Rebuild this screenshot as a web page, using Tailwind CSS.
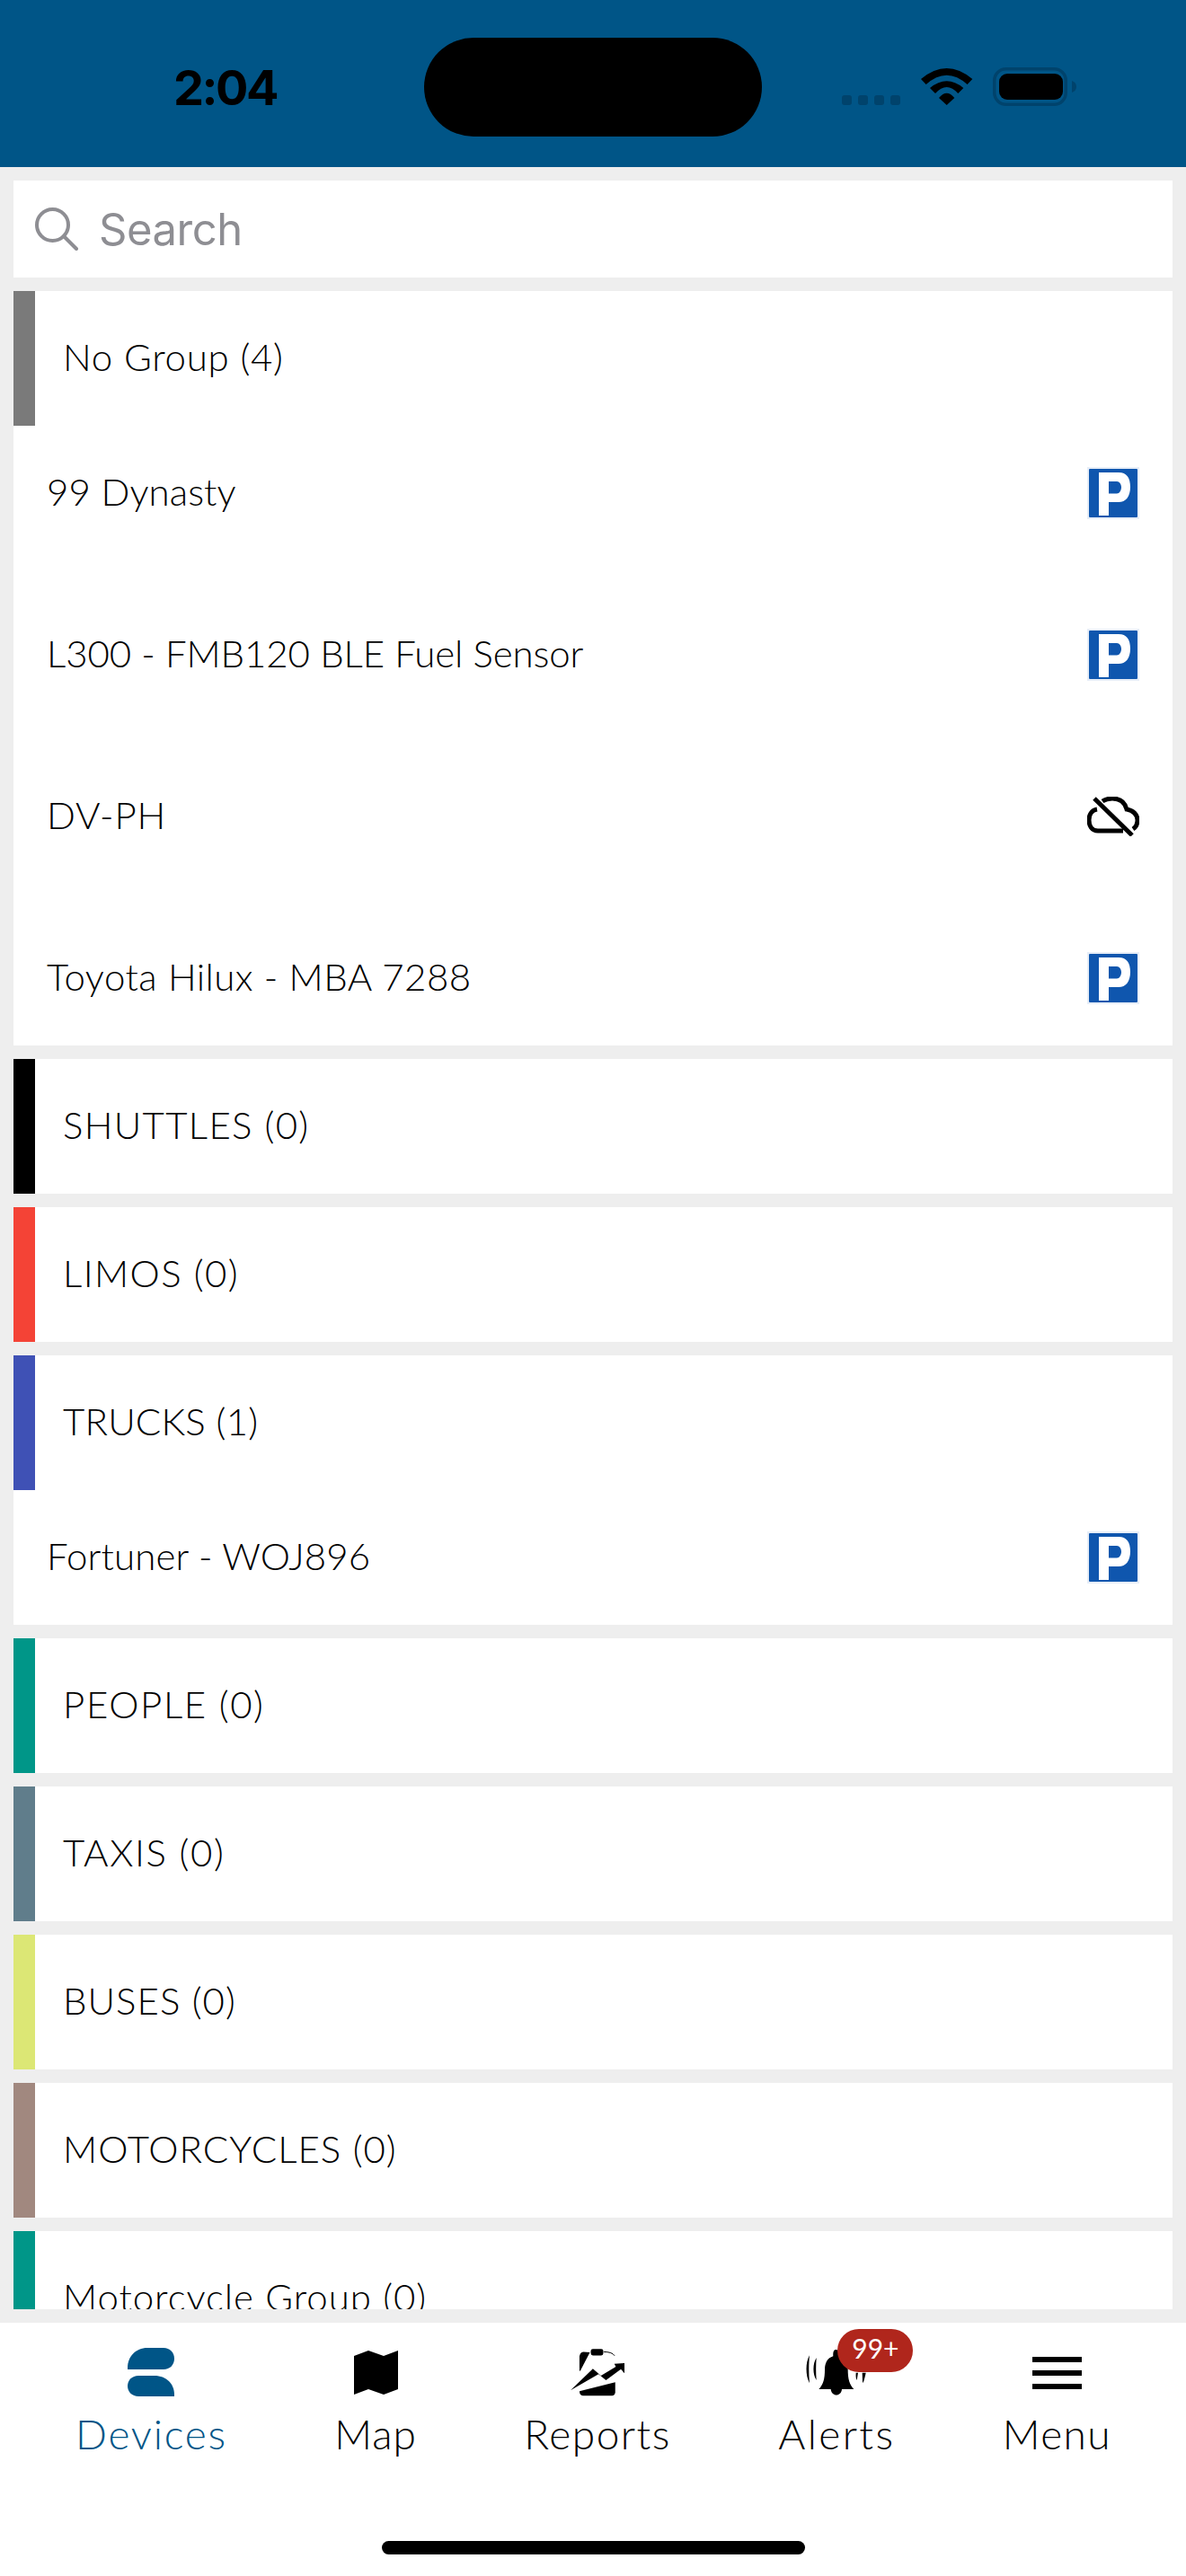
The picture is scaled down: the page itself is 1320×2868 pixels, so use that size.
<!DOCTYPE html>
<html lang="en">
<head>
    <meta charset="UTF-8">
    <meta name="viewport" content="width=device-width, initial-scale=1.0">
    <title>Devices</title>
    <script src="https://cdn.jsdelivr.net/npm/@tailwindcss/browser@4"></script>
</head>
<body class="bg-[#eeeeee] font-['Lato',sans-serif] font-light text-black">
    <div class="h-[2868px] flex flex-col">
        <!-- Status bar -->
        <header class="h-[186px] shrink-0 bg-[#005587] flex items-start pl-[193px]">
            <div class="w-[279px] mt-[69px] font-['Inter',sans-serif] font-bold text-[54px] leading-[58px] tracking-[-2.5px] text-black">2:04</div>
            <div class="w-[376px] h-[110px] mt-[42px] bg-black rounded-full"></div>
            <div class="ml-[89px] mt-[75px] flex items-end">
                <div class="flex gap-[7px] mb-[1px]">
                    <span class="w-[11px] h-[11px] rounded-[3px] bg-[#00436c]"></span>
                    <span class="w-[11px] h-[11px] rounded-[3px] bg-[#00436c]"></span>
                    <span class="w-[11px] h-[11px] rounded-[3px] bg-[#00436c]"></span>
                    <span class="w-[11px] h-[11px] rounded-[3px] bg-[#00436c]"></span>
                </div>
                <svg class="ml-[23px]" width="58" height="42" viewBox="0 0 58 42">
                    <path d="M0 12Q28.7 -12 57.3 12L51.6 18Q28.7 -2.6 5.7 18Z"/>
                    <path d="M10 22Q28.7 6.6 47.3 22L41.3 28Q28.7 14 16 28Z"/>
                    <path d="M20 33Q28.7 22.4 37.3 33L28.7 41Z"/>
                </svg>
                <svg class="ml-[22px]" width="94" height="43" viewBox="0 0 94 43">
                    <rect x="1.75" y="1.75" width="79.5" height="39.5" rx="13" fill="none" stroke="#00436c" stroke-width="3.5"/>
                    <rect x="7" y="7" width="71" height="29" rx="9" fill="#000"/>
                    <path d="M88 15C91 16 93 18 93 21.500C93 25 91 27 88 28Z" fill="#00436c"/>
                </svg>
            </div>
        </header>

        <!-- Device list -->
        <main class="flex-1 min-h-0 p-[15px]">
            <div class="h-full overflow-hidden flex flex-col gap-[15px]">
                <div class="h-[108px] shrink-0 bg-white flex items-center pl-[24px]">
                    <svg width="48" height="48" viewBox="0 0 48 48" fill="none" stroke="#8e8e93" stroke-width="4" stroke-linecap="round">
                        <circle cx="19.500" cy="19.500" r="17.500"/>
                        <path d="M32 32L46 46"/>
                    </svg>
                    <span class="ml-[23px] font-['Inter',sans-serif] font-normal text-[49px] leading-none tracking-[-0.5px] text-[#8e8e93]">Search</span>
                </div>

                <section class="shrink-0 bg-white">
                    <div class="h-[150px] flex">
                        <div class="w-[24px] bg-[#7a7a7a]"></div>
                        <div class="pl-[31px] pb-[4px] flex items-center text-[42px] tracking-[0.7px]">No Group (4)</div>
                    </div>
                    <div class="flex flex-col gap-[30px]">
                        <div class="h-[150px] pl-[37px] pr-[37px] flex items-center justify-between text-[42px]">
                            <span class="pb-[4px] tracking-[0.1px]">99 Dynasty</span>
                            <svg width="58" height="58" viewBox="0 0 58 58"><rect width="58" height="58" fill="#e6edf7"/><rect x="2" y="2" width="54" height="54" rx="1" fill="#0f56ae"/><path fill="#fff" fill-rule="evenodd" d="M13 6H35C44 6 48 12 48 22C48 33 43 39 35 39H24V54H13ZM24 16V29.500H33C36 29.500 38 26 38 22.500C38 19 36 16 33 16Z"/></svg>
                        </div>
                        <div class="h-[150px] pl-[37px] pr-[37px] flex items-center justify-between text-[42px]">
                            <span class="pb-[4px] tracking-[-0.1px]">L300 - FMB120 BLE Fuel Sensor</span>
                            <svg width="58" height="58" viewBox="0 0 58 58"><rect width="58" height="58" fill="#e6edf7"/><rect x="2" y="2" width="54" height="54" rx="1" fill="#0f56ae"/><path fill="#fff" fill-rule="evenodd" d="M13 6H35C44 6 48 12 48 22C48 33 43 39 35 39H24V54H13ZM24 16V29.500H33C36 29.500 38 26 38 22.500C38 19 36 16 33 16Z"/></svg>
                        </div>
                        <div class="h-[150px] pl-[37px] pr-[37px] flex items-center justify-between text-[42px]">
                            <span class="pb-[4px] tracking-[0.8px]">DV-PH</span>
                            <svg width="58" height="44" viewBox="0 0 58 44" fill="none" stroke="#000" stroke-width="5">
                                <path d="M40 38H12C5 38 2 32 2 26C2 20 5 15 11 14"/>
                                <path d="M17 5C20 3 24 2 28 2C36 2 42 6 44 14C51 15 56 20 56 26C56 31 54 34 51 36"/>
                                <path d="M8 2L50 43"/>
                            </svg>
                        </div>
                        <div class="h-[150px] pl-[37px] pr-[37px] flex items-center justify-between text-[42px]">
                            <span class="pb-[4px] tracking-[0.45px]">Toyota Hilux - MBA 7288</span>
                            <svg width="58" height="58" viewBox="0 0 58 58"><rect width="58" height="58" fill="#e6edf7"/><rect x="2" y="2" width="54" height="54" rx="1" fill="#0f56ae"/><path fill="#fff" fill-rule="evenodd" d="M13 6H35C44 6 48 12 48 22C48 33 43 39 35 39H24V54H13ZM24 16V29.500H33C36 29.500 38 26 38 22.500C38 19 36 16 33 16Z"/></svg>
                        </div>
                    </div>
                </section>

                <section class="h-[150px] shrink-0 bg-white flex">
                    <div class="w-[24px] bg-black"></div>
                    <div class="pl-[31px] pb-[4px] flex items-center text-[42px] tracking-[1.3px]">SHUTTLES (0)</div>
                </section>
                <section class="h-[150px] shrink-0 bg-white flex">
                    <div class="w-[24px] bg-[#f44336]"></div>
                    <div class="pl-[31px] pb-[4px] flex items-center text-[42px] tracking-[1.4px]">LIMOS (0)</div>
                </section>

                <section class="shrink-0 bg-white">
                    <div class="h-[150px] flex">
                        <div class="w-[24px] bg-[#3f51b5]"></div>
                        <div class="pl-[31px] pb-[4px] flex items-center text-[42px] tracking-[0.2px]">TRUCKS (1)</div>
                    </div>
                    <div class="h-[150px] pl-[37px] pr-[37px] flex items-center justify-between text-[42px]">
                        <span class="pb-[4px] tracking-[0.1px]">Fortuner - WOJ896</span>
                        <svg width="58" height="58" viewBox="0 0 58 58"><rect width="58" height="58" fill="#e6edf7"/><rect x="2" y="2" width="54" height="54" rx="1" fill="#0f56ae"/><path fill="#fff" fill-rule="evenodd" d="M13 6H35C44 6 48 12 48 22C48 33 43 39 35 39H24V54H13ZM24 16V29.500H33C36 29.500 38 26 38 22.500C38 19 36 16 33 16Z"/></svg>
                    </div>
                </section>

                <section class="h-[150px] shrink-0 bg-white flex">
                    <div class="w-[24px] bg-[#009688]"></div>
                    <div class="pl-[31px] pb-[4px] flex items-center text-[42px] tracking-[1.6px]">PEOPLE (0)</div>
                </section>
                <section class="h-[150px] shrink-0 bg-white flex">
                    <div class="w-[24px] bg-[#607d8b]"></div>
                    <div class="pl-[31px] pb-[4px] flex items-center text-[42px] tracking-[1.6px]">TAXIS (0)</div>
                </section>
                <section class="h-[150px] shrink-0 bg-white flex">
                    <div class="w-[24px] bg-[#dce775]"></div>
                    <div class="pl-[31px] pb-[4px] flex items-center text-[42px] tracking-[1px]">BUSES (0)</div>
                </section>
                <section class="h-[150px] shrink-0 bg-white flex">
                    <div class="w-[24px] bg-[#a1887f]"></div>
                    <div class="pl-[31px] pb-[4px] flex items-center text-[42px] tracking-[1px]">MOTORCYCLES (0)</div>
                </section>
                <section class="h-[150px] shrink-0 bg-white flex">
                    <div class="w-[24px] bg-[#009688]"></div>
                    <div class="pl-[31px] pb-[4px] flex items-center text-[42px] tracking-[0.95px]">Motorcycle Group (0)</div>
                </section>
            </div>
        </main>

        <!-- Tab bar -->
        <nav class="h-[282px] shrink-0 bg-white flex flex-col">
            <div class="flex justify-between pl-[84px] pr-[83px] pt-[28px]">
                <div class="flex flex-col items-center text-[#005587]">
                    <svg class="h-[54px]" width="52" height="54" viewBox="0 0 52 54" fill="#005587">
                        <path d="M0 24V22C0 10 9 0 22 0H40C47 0 52 5 52 12C52 19 47 24 40 24Z"/>
                        <path d="M52 54V52C52 40 43 31 30 31H12C5 31 0 36 0 42.500C0 49 5 54 12 54Z"/>
                    </svg>
                    <span class="mt-[14px] text-[46px] leading-[56px] tracking-[1.8px]">Devices</span>
                </div>
                <div class="flex flex-col items-center">
                    <svg width="49" height="54" viewBox="0 0 49 54">
                        <path d="M0 9L16 3L33 9L49 3V46L33 52L16 46L0 52Z"/>
                    </svg>
                    <span class="mt-[14px] text-[46px] leading-[56px] tracking-[1px]">Map</span>
                </div>
                <div class="flex flex-col items-center">
                    <svg width="63" height="54" viewBox="100 72 190 162">
                        <path d="M133 100C134 92 138 86 146 85L168 87L135 150C133 148 133 146 133 144Z"/>
                        <rect x="171" y="75" width="42" height="22" rx="7"/>
                        <path d="M215 85C230 85 245 88 251 98" fill="none" stroke="#000" stroke-width="3"/>
                        <path d="M103 214L178 142L205 165L255 135L250 125L284 123V157L272 143L222 180L197 160Z"/>
                        <path d="M133 217L253 187V220C253 228 248 232 242 232H146C138 232 133 227 133 217Z"/>
                    </svg>
                    <span class="mt-[14px] text-[46px] leading-[56px] tracking-[1.5px]">Reports</span>
                </div>
                <div class="flex flex-col items-center">
                    <div class="relative">
                        <svg class="block" width="68" height="54" viewBox="50 72 204 162">
                            <path d="M150 78C143 78 140 85 141 100C122 106 113 122 113 145C113 175 108 195 93 210H210C195 195 190 175 190 145C190 122 180 106 161 100C162 85 157 78 150 78Z"/>
                            <path d="M133 210C135 236 168 236 170 210Z"/>
                            <path d="M62 97C48 120 48 165 62 190C59 160 59 125 62 97Z"/>
                            <path d="M85 105C72 125 72 160 85 180C83 155 83 130 85 105Z"/>
                            <path d="M217 155C216 165 217 175 220 180C222 170 223 160 224 155Z"/>
                            <path d="M238 155C239 170 238 180 240 190C245 180 248 165 250 155Z"/>
                        </svg>
                        <span class="absolute left-[35px] top-[-21px] w-[84px] h-[48px] rounded-[24px] bg-[#b0261c] text-white text-[30px] font-normal leading-[42px] text-center">99+</span>
                    </div>
                    <span class="mt-[14px] text-[46px] leading-[56px] tracking-[2.4px]">Alerts</span>
                </div>
                <div class="flex flex-col items-center">
                    <div class="h-[54px] pt-[10px] flex flex-col gap-[9px]">
                        <span class="block w-[55px] h-[6px] bg-black"></span>
                        <span class="block w-[55px] h-[6px] bg-black"></span>
                        <span class="block w-[55px] h-[6px] bg-black"></span>
                    </div>
                    <span class="mt-[14px] text-[46px] leading-[56px] tracking-[1.4px]">Menu</span>
                </div>
            </div>
            <div class="mt-auto mb-[24px] mx-auto w-[471px] h-[15px] rounded-full bg-black"></div>
        </nav>
    </div>
</body>
</html>
